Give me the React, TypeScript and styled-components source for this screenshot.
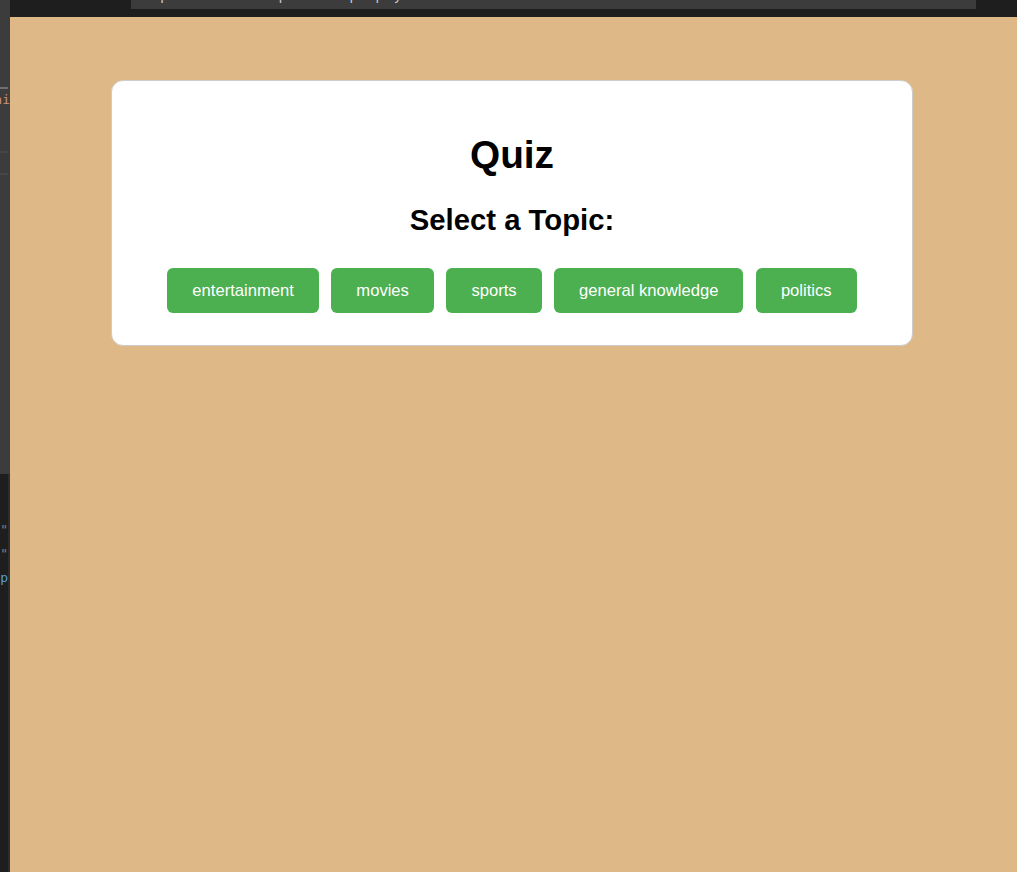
import React from "react";
import styled, { createGlobalStyle } from "styled-components";

const GlobalStyle = createGlobalStyle`
  html, body {
    margin: 0;
    padding: 0;
    height: 100%;
    background: #deb887;
  }
  body {
    font-family: "Liberation Sans", Arial, sans-serif;
  }
  * { box-sizing: border-box; }
`;

const Shell = styled.div`
  display: flex;
  min-height: 100vh;
  width: 100%;
`;

const SideStrip = styled.div`
  width: 10px;
  flex: none;
  display: flex;
  flex-direction: column;
  overflow: hidden;
`;

const SideTop = styled.div`
  height: 474px;
  background: #3c3c3c;
  display: flex;
  flex-direction: column;
  padding-top: 87px;
`;

const SideRule = styled.div<{ $color: string; $mt?: number }>`
  height: 2px;
  width: 8px;
  background: ${(p) => p.$color};
  margin-top: ${(p) => p.$mt ?? 0}px;
`;

const SideFragment = styled.div`
  width: 10px;
  overflow: hidden;
  white-space: nowrap;
  direction: rtl;
  font-family: "DejaVu Sans Mono", monospace;
  font-size: 13px;
  line-height: 18px;
  margin-top: 2px;
  color: #ce9178;
`;

const SideBottom = styled.div`
  flex: 1;
  background: #1e1e1e;
  border-right: 2px solid #2d2d2d;
  padding-top: 44px;
  display: flex;
  flex-direction: column;
`;

const CodeLine = styled.div<{ $color: string }>`
  width: 8px;
  overflow: hidden;
  white-space: nowrap;
  direction: rtl;
  font-family: "DejaVu Sans Mono", monospace;
  font-size: 13px;
  line-height: 24px;
  color: ${(p) => p.$color};
`;

const Main = styled.div`
  flex: 1;
  display: flex;
  flex-direction: column;
  min-width: 0;
`;

const TopBar = styled.div`
  height: 17px;
  background: #1e1e1e;
  padding-left: 121px;
  padding-right: 41px;
`;

const AddressBox = styled.div`
  height: 9px;
  background: #3c3c3c;
  overflow: hidden;
  padding-left: 14px;
`;

const AddressText = styled.div`
  font-family: "Liberation Sans", Arial, sans-serif;
  font-size: 14px;
  line-height: 16px;
  margin-top: -13px;
  color: #cccccc;
  white-space: nowrap;
`;

const Page = styled.main`
  flex: 1;
  background: #deb887;
  padding: 63px 3px 0 0;
`;

const Card = styled.section`
  width: 802px;
  margin: 0 auto;
  background: #ffffff;
  border: 1px solid #cccccc;
  border-radius: 12px;
  padding: 26px 24px 32px;
  text-align: center;
`;

const Title = styled.h1`
  margin: 25.7px 0 0;
  font-size: 38.8px;
  font-weight: bold;
  color: #000;
`;

const Subtitle = styled.h2`
  margin: 26px 0 31.5px;
  font-size: 29.3px;
  font-weight: bold;
  color: #000;
`;

const TopicRow = styled.div`
  display: flex;
  justify-content: center;
  gap: 12.5px;
`;

const TopicButton = styled.button`
  height: 45px;
  padding: 0 25px;
  border: none;
  border-radius: 6px;
  background: #4caf50;
  color: #ffffff;
  font-family: "Liberation Sans", Arial, sans-serif;
  font-size: 16.6px;
  cursor: pointer;
`;

const topics = ["entertainment", "movies", "sports", "general knowledge", "politics"];

export default function App() {
  return (
    <>
      <GlobalStyle />
      <Shell>
        <SideStrip>
          <SideTop>
            <SideRule $color="#6e6e6e" />
            <SideFragment>ni</SideFragment>
            <SideRule $color="#464646" $mt={42} />
            <SideRule $color="#464646" $mt={20} />
          </SideTop>
          <SideBottom>
            <CodeLine $color="#808080">"&gt;</CodeLine>
            <CodeLine $color="#808080">"&gt;</CodeLine>
            <CodeLine $color="#569cd6">sp</CodeLine>
          </SideBottom>
        </SideStrip>
        <Main>
          <TopBar>
            <AddressBox>
              <AddressText>http://localhost:3000/quiz.html?topic=play</AddressText>
            </AddressBox>
          </TopBar>
          <Page>
            <Card>
              <Title>Quiz</Title>
              <Subtitle>Select a Topic:</Subtitle>
              <TopicRow>
                {topics.map((t) => (
                  <TopicButton key={t}>{t}</TopicButton>
                ))}
              </TopicRow>
            </Card>
          </Page>
        </Main>
      </Shell>
    </>
  );
}
